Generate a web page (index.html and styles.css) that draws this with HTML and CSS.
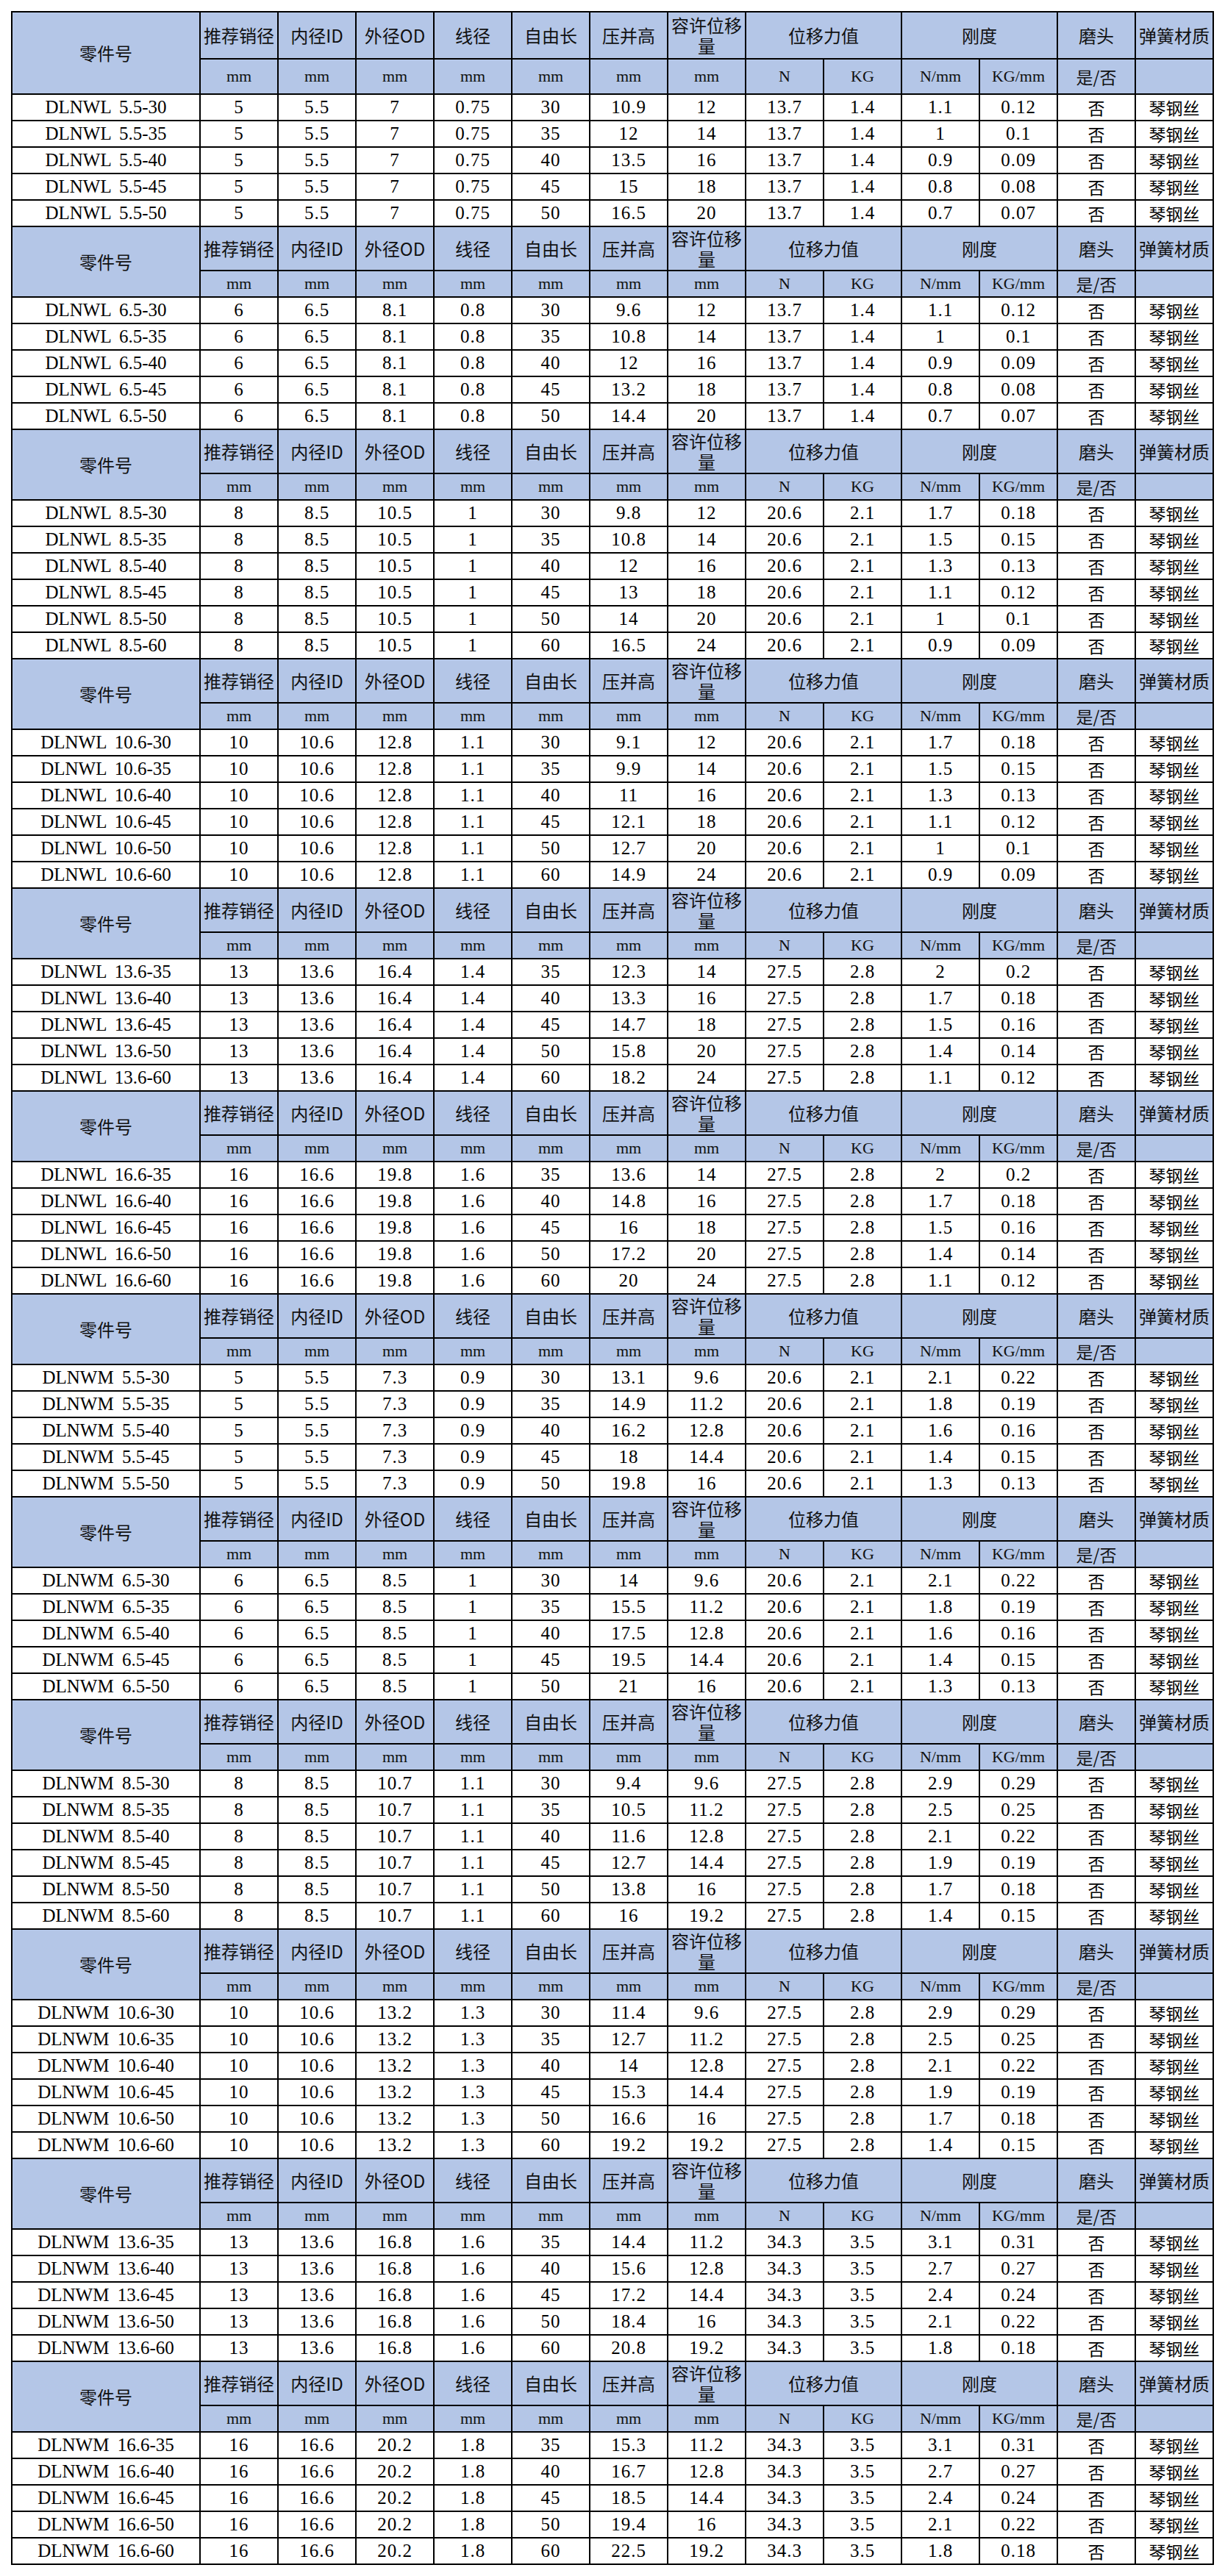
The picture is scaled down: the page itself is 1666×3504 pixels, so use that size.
FILE: index.html
```html
<!DOCTYPE html>
<html lang="zh-CN">
<head>
<meta charset="utf-8">
<title>DLNWL / DLNWM 弹簧规格表</title>
<link rel="stylesheet" href="styles.css">
</head>
<body>
<table class="spec">
<colgroup>
<col class="c-part"><col><col><col><col><col><col><col><col><col><col><col><col><col>
</colgroup>
<tbody class="sec first">
<tr class="h1"><th rowspan="2">零件号</th><th>推荐销径</th><th>内径ID</th><th>外径OD</th><th>线径</th><th>自由长</th><th>压并高</th><th class="wrap">容许位移量</th><th colspan="2">位移力值</th><th colspan="2">刚度</th><th>磨头</th><th>弹簧材质</th></tr>
<tr class="h2"><th>mm</th><th>mm</th><th>mm</th><th>mm</th><th>mm</th><th>mm</th><th>mm</th><th>N</th><th>KG</th><th>N/mm</th><th>KG/mm</th><th class="cjk">是/否</th><th></th></tr>
<tr><td>DLNWL 5.5-30</td><td>5</td><td>5.5</td><td>7</td><td>0.75</td><td>30</td><td>10.9</td><td>12</td><td>13.7</td><td>1.4</td><td>1.1</td><td>0.12</td><td>否</td><td>琴钢丝</td></tr>
<tr><td>DLNWL 5.5-35</td><td>5</td><td>5.5</td><td>7</td><td>0.75</td><td>35</td><td>12</td><td>14</td><td>13.7</td><td>1.4</td><td>1</td><td>0.1</td><td>否</td><td>琴钢丝</td></tr>
<tr><td>DLNWL 5.5-40</td><td>5</td><td>5.5</td><td>7</td><td>0.75</td><td>40</td><td>13.5</td><td>16</td><td>13.7</td><td>1.4</td><td>0.9</td><td>0.09</td><td>否</td><td>琴钢丝</td></tr>
<tr><td>DLNWL 5.5-45</td><td>5</td><td>5.5</td><td>7</td><td>0.75</td><td>45</td><td>15</td><td>18</td><td>13.7</td><td>1.4</td><td>0.8</td><td>0.08</td><td>否</td><td>琴钢丝</td></tr>
<tr><td>DLNWL 5.5-50</td><td>5</td><td>5.5</td><td>7</td><td>0.75</td><td>50</td><td>16.5</td><td>20</td><td>13.7</td><td>1.4</td><td>0.7</td><td>0.07</td><td>否</td><td>琴钢丝</td></tr>
</tbody>
<tbody class="sec">
<tr class="h1"><th rowspan="2">零件号</th><th>推荐销径</th><th>内径ID</th><th>外径OD</th><th>线径</th><th>自由长</th><th>压并高</th><th class="wrap">容许位移量</th><th colspan="2">位移力值</th><th colspan="2">刚度</th><th>磨头</th><th>弹簧材质</th></tr>
<tr class="h2"><th>mm</th><th>mm</th><th>mm</th><th>mm</th><th>mm</th><th>mm</th><th>mm</th><th>N</th><th>KG</th><th>N/mm</th><th>KG/mm</th><th class="cjk">是/否</th><th></th></tr>
<tr><td>DLNWL 6.5-30</td><td>6</td><td>6.5</td><td>8.1</td><td>0.8</td><td>30</td><td>9.6</td><td>12</td><td>13.7</td><td>1.4</td><td>1.1</td><td>0.12</td><td>否</td><td>琴钢丝</td></tr>
<tr><td>DLNWL 6.5-35</td><td>6</td><td>6.5</td><td>8.1</td><td>0.8</td><td>35</td><td>10.8</td><td>14</td><td>13.7</td><td>1.4</td><td>1</td><td>0.1</td><td>否</td><td>琴钢丝</td></tr>
<tr><td>DLNWL 6.5-40</td><td>6</td><td>6.5</td><td>8.1</td><td>0.8</td><td>40</td><td>12</td><td>16</td><td>13.7</td><td>1.4</td><td>0.9</td><td>0.09</td><td>否</td><td>琴钢丝</td></tr>
<tr><td>DLNWL 6.5-45</td><td>6</td><td>6.5</td><td>8.1</td><td>0.8</td><td>45</td><td>13.2</td><td>18</td><td>13.7</td><td>1.4</td><td>0.8</td><td>0.08</td><td>否</td><td>琴钢丝</td></tr>
<tr><td>DLNWL 6.5-50</td><td>6</td><td>6.5</td><td>8.1</td><td>0.8</td><td>50</td><td>14.4</td><td>20</td><td>13.7</td><td>1.4</td><td>0.7</td><td>0.07</td><td>否</td><td>琴钢丝</td></tr>
</tbody>
<tbody class="sec">
<tr class="h1"><th rowspan="2">零件号</th><th>推荐销径</th><th>内径ID</th><th>外径OD</th><th>线径</th><th>自由长</th><th>压并高</th><th class="wrap">容许位移量</th><th colspan="2">位移力值</th><th colspan="2">刚度</th><th>磨头</th><th>弹簧材质</th></tr>
<tr class="h2"><th>mm</th><th>mm</th><th>mm</th><th>mm</th><th>mm</th><th>mm</th><th>mm</th><th>N</th><th>KG</th><th>N/mm</th><th>KG/mm</th><th class="cjk">是/否</th><th></th></tr>
<tr><td>DLNWL 8.5-30</td><td>8</td><td>8.5</td><td>10.5</td><td>1</td><td>30</td><td>9.8</td><td>12</td><td>20.6</td><td>2.1</td><td>1.7</td><td>0.18</td><td>否</td><td>琴钢丝</td></tr>
<tr><td>DLNWL 8.5-35</td><td>8</td><td>8.5</td><td>10.5</td><td>1</td><td>35</td><td>10.8</td><td>14</td><td>20.6</td><td>2.1</td><td>1.5</td><td>0.15</td><td>否</td><td>琴钢丝</td></tr>
<tr><td>DLNWL 8.5-40</td><td>8</td><td>8.5</td><td>10.5</td><td>1</td><td>40</td><td>12</td><td>16</td><td>20.6</td><td>2.1</td><td>1.3</td><td>0.13</td><td>否</td><td>琴钢丝</td></tr>
<tr><td>DLNWL 8.5-45</td><td>8</td><td>8.5</td><td>10.5</td><td>1</td><td>45</td><td>13</td><td>18</td><td>20.6</td><td>2.1</td><td>1.1</td><td>0.12</td><td>否</td><td>琴钢丝</td></tr>
<tr><td>DLNWL 8.5-50</td><td>8</td><td>8.5</td><td>10.5</td><td>1</td><td>50</td><td>14</td><td>20</td><td>20.6</td><td>2.1</td><td>1</td><td>0.1</td><td>否</td><td>琴钢丝</td></tr>
<tr><td>DLNWL 8.5-60</td><td>8</td><td>8.5</td><td>10.5</td><td>1</td><td>60</td><td>16.5</td><td>24</td><td>20.6</td><td>2.1</td><td>0.9</td><td>0.09</td><td>否</td><td>琴钢丝</td></tr>
</tbody>
<tbody class="sec">
<tr class="h1"><th rowspan="2">零件号</th><th>推荐销径</th><th>内径ID</th><th>外径OD</th><th>线径</th><th>自由长</th><th>压并高</th><th class="wrap">容许位移量</th><th colspan="2">位移力值</th><th colspan="2">刚度</th><th>磨头</th><th>弹簧材质</th></tr>
<tr class="h2"><th>mm</th><th>mm</th><th>mm</th><th>mm</th><th>mm</th><th>mm</th><th>mm</th><th>N</th><th>KG</th><th>N/mm</th><th>KG/mm</th><th class="cjk">是/否</th><th></th></tr>
<tr><td>DLNWL 10.6-30</td><td>10</td><td>10.6</td><td>12.8</td><td>1.1</td><td>30</td><td>9.1</td><td>12</td><td>20.6</td><td>2.1</td><td>1.7</td><td>0.18</td><td>否</td><td>琴钢丝</td></tr>
<tr><td>DLNWL 10.6-35</td><td>10</td><td>10.6</td><td>12.8</td><td>1.1</td><td>35</td><td>9.9</td><td>14</td><td>20.6</td><td>2.1</td><td>1.5</td><td>0.15</td><td>否</td><td>琴钢丝</td></tr>
<tr><td>DLNWL 10.6-40</td><td>10</td><td>10.6</td><td>12.8</td><td>1.1</td><td>40</td><td>11</td><td>16</td><td>20.6</td><td>2.1</td><td>1.3</td><td>0.13</td><td>否</td><td>琴钢丝</td></tr>
<tr><td>DLNWL 10.6-45</td><td>10</td><td>10.6</td><td>12.8</td><td>1.1</td><td>45</td><td>12.1</td><td>18</td><td>20.6</td><td>2.1</td><td>1.1</td><td>0.12</td><td>否</td><td>琴钢丝</td></tr>
<tr><td>DLNWL 10.6-50</td><td>10</td><td>10.6</td><td>12.8</td><td>1.1</td><td>50</td><td>12.7</td><td>20</td><td>20.6</td><td>2.1</td><td>1</td><td>0.1</td><td>否</td><td>琴钢丝</td></tr>
<tr><td>DLNWL 10.6-60</td><td>10</td><td>10.6</td><td>12.8</td><td>1.1</td><td>60</td><td>14.9</td><td>24</td><td>20.6</td><td>2.1</td><td>0.9</td><td>0.09</td><td>否</td><td>琴钢丝</td></tr>
</tbody>
<tbody class="sec">
<tr class="h1"><th rowspan="2">零件号</th><th>推荐销径</th><th>内径ID</th><th>外径OD</th><th>线径</th><th>自由长</th><th>压并高</th><th class="wrap">容许位移量</th><th colspan="2">位移力值</th><th colspan="2">刚度</th><th>磨头</th><th>弹簧材质</th></tr>
<tr class="h2"><th>mm</th><th>mm</th><th>mm</th><th>mm</th><th>mm</th><th>mm</th><th>mm</th><th>N</th><th>KG</th><th>N/mm</th><th>KG/mm</th><th class="cjk">是/否</th><th></th></tr>
<tr><td>DLNWL 13.6-35</td><td>13</td><td>13.6</td><td>16.4</td><td>1.4</td><td>35</td><td>12.3</td><td>14</td><td>27.5</td><td>2.8</td><td>2</td><td>0.2</td><td>否</td><td>琴钢丝</td></tr>
<tr><td>DLNWL 13.6-40</td><td>13</td><td>13.6</td><td>16.4</td><td>1.4</td><td>40</td><td>13.3</td><td>16</td><td>27.5</td><td>2.8</td><td>1.7</td><td>0.18</td><td>否</td><td>琴钢丝</td></tr>
<tr><td>DLNWL 13.6-45</td><td>13</td><td>13.6</td><td>16.4</td><td>1.4</td><td>45</td><td>14.7</td><td>18</td><td>27.5</td><td>2.8</td><td>1.5</td><td>0.16</td><td>否</td><td>琴钢丝</td></tr>
<tr><td>DLNWL 13.6-50</td><td>13</td><td>13.6</td><td>16.4</td><td>1.4</td><td>50</td><td>15.8</td><td>20</td><td>27.5</td><td>2.8</td><td>1.4</td><td>0.14</td><td>否</td><td>琴钢丝</td></tr>
<tr><td>DLNWL 13.6-60</td><td>13</td><td>13.6</td><td>16.4</td><td>1.4</td><td>60</td><td>18.2</td><td>24</td><td>27.5</td><td>2.8</td><td>1.1</td><td>0.12</td><td>否</td><td>琴钢丝</td></tr>
</tbody>
<tbody class="sec">
<tr class="h1"><th rowspan="2">零件号</th><th>推荐销径</th><th>内径ID</th><th>外径OD</th><th>线径</th><th>自由长</th><th>压并高</th><th class="wrap">容许位移量</th><th colspan="2">位移力值</th><th colspan="2">刚度</th><th>磨头</th><th>弹簧材质</th></tr>
<tr class="h2"><th>mm</th><th>mm</th><th>mm</th><th>mm</th><th>mm</th><th>mm</th><th>mm</th><th>N</th><th>KG</th><th>N/mm</th><th>KG/mm</th><th class="cjk">是/否</th><th></th></tr>
<tr><td>DLNWL 16.6-35</td><td>16</td><td>16.6</td><td>19.8</td><td>1.6</td><td>35</td><td>13.6</td><td>14</td><td>27.5</td><td>2.8</td><td>2</td><td>0.2</td><td>否</td><td>琴钢丝</td></tr>
<tr><td>DLNWL 16.6-40</td><td>16</td><td>16.6</td><td>19.8</td><td>1.6</td><td>40</td><td>14.8</td><td>16</td><td>27.5</td><td>2.8</td><td>1.7</td><td>0.18</td><td>否</td><td>琴钢丝</td></tr>
<tr><td>DLNWL 16.6-45</td><td>16</td><td>16.6</td><td>19.8</td><td>1.6</td><td>45</td><td>16</td><td>18</td><td>27.5</td><td>2.8</td><td>1.5</td><td>0.16</td><td>否</td><td>琴钢丝</td></tr>
<tr><td>DLNWL 16.6-50</td><td>16</td><td>16.6</td><td>19.8</td><td>1.6</td><td>50</td><td>17.2</td><td>20</td><td>27.5</td><td>2.8</td><td>1.4</td><td>0.14</td><td>否</td><td>琴钢丝</td></tr>
<tr><td>DLNWL 16.6-60</td><td>16</td><td>16.6</td><td>19.8</td><td>1.6</td><td>60</td><td>20</td><td>24</td><td>27.5</td><td>2.8</td><td>1.1</td><td>0.12</td><td>否</td><td>琴钢丝</td></tr>
</tbody>
<tbody class="sec">
<tr class="h1"><th rowspan="2">零件号</th><th>推荐销径</th><th>内径ID</th><th>外径OD</th><th>线径</th><th>自由长</th><th>压并高</th><th class="wrap">容许位移量</th><th colspan="2">位移力值</th><th colspan="2">刚度</th><th>磨头</th><th>弹簧材质</th></tr>
<tr class="h2"><th>mm</th><th>mm</th><th>mm</th><th>mm</th><th>mm</th><th>mm</th><th>mm</th><th>N</th><th>KG</th><th>N/mm</th><th>KG/mm</th><th class="cjk">是/否</th><th></th></tr>
<tr><td>DLNWM 5.5-30</td><td>5</td><td>5.5</td><td>7.3</td><td>0.9</td><td>30</td><td>13.1</td><td>9.6</td><td>20.6</td><td>2.1</td><td>2.1</td><td>0.22</td><td>否</td><td>琴钢丝</td></tr>
<tr><td>DLNWM 5.5-35</td><td>5</td><td>5.5</td><td>7.3</td><td>0.9</td><td>35</td><td>14.9</td><td>11.2</td><td>20.6</td><td>2.1</td><td>1.8</td><td>0.19</td><td>否</td><td>琴钢丝</td></tr>
<tr><td>DLNWM 5.5-40</td><td>5</td><td>5.5</td><td>7.3</td><td>0.9</td><td>40</td><td>16.2</td><td>12.8</td><td>20.6</td><td>2.1</td><td>1.6</td><td>0.16</td><td>否</td><td>琴钢丝</td></tr>
<tr><td>DLNWM 5.5-45</td><td>5</td><td>5.5</td><td>7.3</td><td>0.9</td><td>45</td><td>18</td><td>14.4</td><td>20.6</td><td>2.1</td><td>1.4</td><td>0.15</td><td>否</td><td>琴钢丝</td></tr>
<tr><td>DLNWM 5.5-50</td><td>5</td><td>5.5</td><td>7.3</td><td>0.9</td><td>50</td><td>19.8</td><td>16</td><td>20.6</td><td>2.1</td><td>1.3</td><td>0.13</td><td>否</td><td>琴钢丝</td></tr>
</tbody>
<tbody class="sec">
<tr class="h1"><th rowspan="2">零件号</th><th>推荐销径</th><th>内径ID</th><th>外径OD</th><th>线径</th><th>自由长</th><th>压并高</th><th class="wrap">容许位移量</th><th colspan="2">位移力值</th><th colspan="2">刚度</th><th>磨头</th><th>弹簧材质</th></tr>
<tr class="h2"><th>mm</th><th>mm</th><th>mm</th><th>mm</th><th>mm</th><th>mm</th><th>mm</th><th>N</th><th>KG</th><th>N/mm</th><th>KG/mm</th><th class="cjk">是/否</th><th></th></tr>
<tr><td>DLNWM 6.5-30</td><td>6</td><td>6.5</td><td>8.5</td><td>1</td><td>30</td><td>14</td><td>9.6</td><td>20.6</td><td>2.1</td><td>2.1</td><td>0.22</td><td>否</td><td>琴钢丝</td></tr>
<tr><td>DLNWM 6.5-35</td><td>6</td><td>6.5</td><td>8.5</td><td>1</td><td>35</td><td>15.5</td><td>11.2</td><td>20.6</td><td>2.1</td><td>1.8</td><td>0.19</td><td>否</td><td>琴钢丝</td></tr>
<tr><td>DLNWM 6.5-40</td><td>6</td><td>6.5</td><td>8.5</td><td>1</td><td>40</td><td>17.5</td><td>12.8</td><td>20.6</td><td>2.1</td><td>1.6</td><td>0.16</td><td>否</td><td>琴钢丝</td></tr>
<tr><td>DLNWM 6.5-45</td><td>6</td><td>6.5</td><td>8.5</td><td>1</td><td>45</td><td>19.5</td><td>14.4</td><td>20.6</td><td>2.1</td><td>1.4</td><td>0.15</td><td>否</td><td>琴钢丝</td></tr>
<tr><td>DLNWM 6.5-50</td><td>6</td><td>6.5</td><td>8.5</td><td>1</td><td>50</td><td>21</td><td>16</td><td>20.6</td><td>2.1</td><td>1.3</td><td>0.13</td><td>否</td><td>琴钢丝</td></tr>
</tbody>
<tbody class="sec">
<tr class="h1"><th rowspan="2">零件号</th><th>推荐销径</th><th>内径ID</th><th>外径OD</th><th>线径</th><th>自由长</th><th>压并高</th><th class="wrap">容许位移量</th><th colspan="2">位移力值</th><th colspan="2">刚度</th><th>磨头</th><th>弹簧材质</th></tr>
<tr class="h2"><th>mm</th><th>mm</th><th>mm</th><th>mm</th><th>mm</th><th>mm</th><th>mm</th><th>N</th><th>KG</th><th>N/mm</th><th>KG/mm</th><th class="cjk">是/否</th><th></th></tr>
<tr><td>DLNWM 8.5-30</td><td>8</td><td>8.5</td><td>10.7</td><td>1.1</td><td>30</td><td>9.4</td><td>9.6</td><td>27.5</td><td>2.8</td><td>2.9</td><td>0.29</td><td>否</td><td>琴钢丝</td></tr>
<tr><td>DLNWM 8.5-35</td><td>8</td><td>8.5</td><td>10.7</td><td>1.1</td><td>35</td><td>10.5</td><td>11.2</td><td>27.5</td><td>2.8</td><td>2.5</td><td>0.25</td><td>否</td><td>琴钢丝</td></tr>
<tr><td>DLNWM 8.5-40</td><td>8</td><td>8.5</td><td>10.7</td><td>1.1</td><td>40</td><td>11.6</td><td>12.8</td><td>27.5</td><td>2.8</td><td>2.1</td><td>0.22</td><td>否</td><td>琴钢丝</td></tr>
<tr><td>DLNWM 8.5-45</td><td>8</td><td>8.5</td><td>10.7</td><td>1.1</td><td>45</td><td>12.7</td><td>14.4</td><td>27.5</td><td>2.8</td><td>1.9</td><td>0.19</td><td>否</td><td>琴钢丝</td></tr>
<tr><td>DLNWM 8.5-50</td><td>8</td><td>8.5</td><td>10.7</td><td>1.1</td><td>50</td><td>13.8</td><td>16</td><td>27.5</td><td>2.8</td><td>1.7</td><td>0.18</td><td>否</td><td>琴钢丝</td></tr>
<tr><td>DLNWM 8.5-60</td><td>8</td><td>8.5</td><td>10.7</td><td>1.1</td><td>60</td><td>16</td><td>19.2</td><td>27.5</td><td>2.8</td><td>1.4</td><td>0.15</td><td>否</td><td>琴钢丝</td></tr>
</tbody>
<tbody class="sec">
<tr class="h1"><th rowspan="2">零件号</th><th>推荐销径</th><th>内径ID</th><th>外径OD</th><th>线径</th><th>自由长</th><th>压并高</th><th class="wrap">容许位移量</th><th colspan="2">位移力值</th><th colspan="2">刚度</th><th>磨头</th><th>弹簧材质</th></tr>
<tr class="h2"><th>mm</th><th>mm</th><th>mm</th><th>mm</th><th>mm</th><th>mm</th><th>mm</th><th>N</th><th>KG</th><th>N/mm</th><th>KG/mm</th><th class="cjk">是/否</th><th></th></tr>
<tr><td>DLNWM 10.6-30</td><td>10</td><td>10.6</td><td>13.2</td><td>1.3</td><td>30</td><td>11.4</td><td>9.6</td><td>27.5</td><td>2.8</td><td>2.9</td><td>0.29</td><td>否</td><td>琴钢丝</td></tr>
<tr><td>DLNWM 10.6-35</td><td>10</td><td>10.6</td><td>13.2</td><td>1.3</td><td>35</td><td>12.7</td><td>11.2</td><td>27.5</td><td>2.8</td><td>2.5</td><td>0.25</td><td>否</td><td>琴钢丝</td></tr>
<tr><td>DLNWM 10.6-40</td><td>10</td><td>10.6</td><td>13.2</td><td>1.3</td><td>40</td><td>14</td><td>12.8</td><td>27.5</td><td>2.8</td><td>2.1</td><td>0.22</td><td>否</td><td>琴钢丝</td></tr>
<tr><td>DLNWM 10.6-45</td><td>10</td><td>10.6</td><td>13.2</td><td>1.3</td><td>45</td><td>15.3</td><td>14.4</td><td>27.5</td><td>2.8</td><td>1.9</td><td>0.19</td><td>否</td><td>琴钢丝</td></tr>
<tr><td>DLNWM 10.6-50</td><td>10</td><td>10.6</td><td>13.2</td><td>1.3</td><td>50</td><td>16.6</td><td>16</td><td>27.5</td><td>2.8</td><td>1.7</td><td>0.18</td><td>否</td><td>琴钢丝</td></tr>
<tr><td>DLNWM 10.6-60</td><td>10</td><td>10.6</td><td>13.2</td><td>1.3</td><td>60</td><td>19.2</td><td>19.2</td><td>27.5</td><td>2.8</td><td>1.4</td><td>0.15</td><td>否</td><td>琴钢丝</td></tr>
</tbody>
<tbody class="sec">
<tr class="h1"><th rowspan="2">零件号</th><th>推荐销径</th><th>内径ID</th><th>外径OD</th><th>线径</th><th>自由长</th><th>压并高</th><th class="wrap">容许位移量</th><th colspan="2">位移力值</th><th colspan="2">刚度</th><th>磨头</th><th>弹簧材质</th></tr>
<tr class="h2"><th>mm</th><th>mm</th><th>mm</th><th>mm</th><th>mm</th><th>mm</th><th>mm</th><th>N</th><th>KG</th><th>N/mm</th><th>KG/mm</th><th class="cjk">是/否</th><th></th></tr>
<tr><td>DLNWM 13.6-35</td><td>13</td><td>13.6</td><td>16.8</td><td>1.6</td><td>35</td><td>14.4</td><td>11.2</td><td>34.3</td><td>3.5</td><td>3.1</td><td>0.31</td><td>否</td><td>琴钢丝</td></tr>
<tr><td>DLNWM 13.6-40</td><td>13</td><td>13.6</td><td>16.8</td><td>1.6</td><td>40</td><td>15.6</td><td>12.8</td><td>34.3</td><td>3.5</td><td>2.7</td><td>0.27</td><td>否</td><td>琴钢丝</td></tr>
<tr><td>DLNWM 13.6-45</td><td>13</td><td>13.6</td><td>16.8</td><td>1.6</td><td>45</td><td>17.2</td><td>14.4</td><td>34.3</td><td>3.5</td><td>2.4</td><td>0.24</td><td>否</td><td>琴钢丝</td></tr>
<tr><td>DLNWM 13.6-50</td><td>13</td><td>13.6</td><td>16.8</td><td>1.6</td><td>50</td><td>18.4</td><td>16</td><td>34.3</td><td>3.5</td><td>2.1</td><td>0.22</td><td>否</td><td>琴钢丝</td></tr>
<tr><td>DLNWM 13.6-60</td><td>13</td><td>13.6</td><td>16.8</td><td>1.6</td><td>60</td><td>20.8</td><td>19.2</td><td>34.3</td><td>3.5</td><td>1.8</td><td>0.18</td><td>否</td><td>琴钢丝</td></tr>
</tbody>
<tbody class="sec">
<tr class="h1"><th rowspan="2">零件号</th><th>推荐销径</th><th>内径ID</th><th>外径OD</th><th>线径</th><th>自由长</th><th>压并高</th><th class="wrap">容许位移量</th><th colspan="2">位移力值</th><th colspan="2">刚度</th><th>磨头</th><th>弹簧材质</th></tr>
<tr class="h2"><th>mm</th><th>mm</th><th>mm</th><th>mm</th><th>mm</th><th>mm</th><th>mm</th><th>N</th><th>KG</th><th>N/mm</th><th>KG/mm</th><th class="cjk">是/否</th><th></th></tr>
<tr><td>DLNWM 16.6-35</td><td>16</td><td>16.6</td><td>20.2</td><td>1.8</td><td>35</td><td>15.3</td><td>11.2</td><td>34.3</td><td>3.5</td><td>3.1</td><td>0.31</td><td>否</td><td>琴钢丝</td></tr>
<tr><td>DLNWM 16.6-40</td><td>16</td><td>16.6</td><td>20.2</td><td>1.8</td><td>40</td><td>16.7</td><td>12.8</td><td>34.3</td><td>3.5</td><td>2.7</td><td>0.27</td><td>否</td><td>琴钢丝</td></tr>
<tr><td>DLNWM 16.6-45</td><td>16</td><td>16.6</td><td>20.2</td><td>1.8</td><td>45</td><td>18.5</td><td>14.4</td><td>34.3</td><td>3.5</td><td>2.4</td><td>0.24</td><td>否</td><td>琴钢丝</td></tr>
<tr><td>DLNWM 16.6-50</td><td>16</td><td>16.6</td><td>20.2</td><td>1.8</td><td>50</td><td>19.4</td><td>16</td><td>34.3</td><td>3.5</td><td>2.1</td><td>0.22</td><td>否</td><td>琴钢丝</td></tr>
<tr><td>DLNWM 16.6-60</td><td>16</td><td>16.6</td><td>20.2</td><td>1.8</td><td>60</td><td>22.5</td><td>19.2</td><td>34.3</td><td>3.5</td><td>1.8</td><td>0.18</td><td>否</td><td>琴钢丝</td></tr>
</tbody>
</table>
</body>
</html>
```

FILE: styles.css
```css
html, body {
  margin: 0;
  padding: 0;
  background: #ffffff;
}

body {
  padding: 15px 0 0 15px;
}

.spec {
  border-collapse: separate;
  border-spacing: 0;
  table-layout: fixed;
  width: 1636px;
  border-left: 2px solid #000;
  border-top: 2px solid #000;
  font-family: "Liberation Serif", "Noto Sans CJK SC", serif;
  font-size: 25px;
  color: #000;
}

.spec col {
  width: 106px;
}

.spec col.c-part {
  width: 256px;
}

.spec th,
.spec td {
  padding: 0;
  border-right: 2px solid #000;
  border-bottom: 2px solid #000;
  text-align: center;
  vertical-align: middle;
  line-height: 28px;
  white-space: nowrap;
}

.spec th {
  background: #b4c6e7;
  font-family: "Noto Sans CJK SC", sans-serif;
  font-weight: 400;
  font-size: 24px;
  color: #111;
}

.spec th.wrap {
  white-space: normal;
  word-break: break-all;
}

.spec tr.h2 th {
  font-family: "Liberation Serif", "Noto Sans CJK SC", serif;
  font-size: 22px;
}

.spec tr.h2 th.cjk {
  font-family: "Noto Sans CJK SC", sans-serif;
  font-size: 23px;
}

.spec td {
  height: 34px;
  letter-spacing: 1px;
}

.spec td:first-child {
  letter-spacing: 0;
  word-spacing: 5px;
}

.spec td:nth-child(13),
.spec td:nth-child(14) {
  font-family: "Noto Sans CJK SC", sans-serif;
  font-size: 23px;
  letter-spacing: 0;
}

.spec tr.h1 th {
  height: 58px;
}

.spec tr.h2 th {
  height: 34px;
}

.spec tbody.first tr.h1 th {
  height: 62px;
}

.spec tbody.first tr.h2 th {
  height: 46px;
}

.spec tr.h1 th[rowspan] {
  height: auto;
}
```
